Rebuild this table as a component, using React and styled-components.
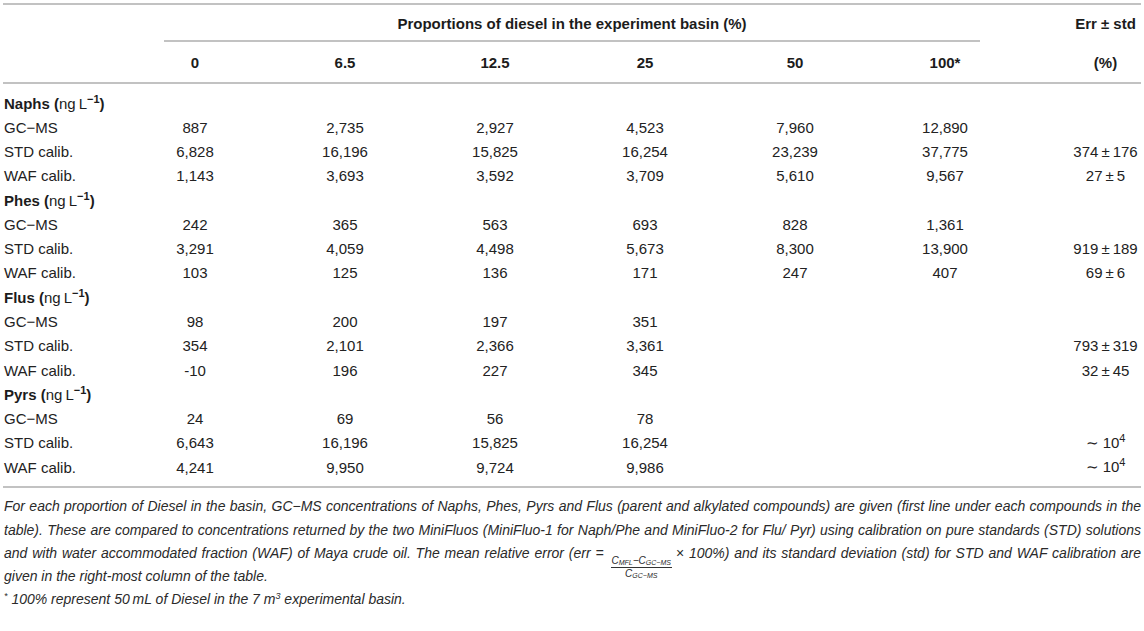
import React from 'react';
import styled, { createGlobalStyle } from 'styled-components';

const GlobalStyle = createGlobalStyle`
  html, body { margin: 0; padding: 0; background: #ffffff; }
  body { font-family: "Liberation Sans", Arial, Helvetica, sans-serif; color: #222222; }
`;

const COLS = '117px repeat(6, 150px) 1fr';
const RULE = '2px solid #c2c2c2';

const Page = styled.div`
  width: 1138px;
  padding: 3px 3px 0 3px;
`;

const Table = styled.div`
  border-top: ${RULE};
  border-bottom: ${RULE};
  font-size: 15px;
`;

const HeadRow = styled.div`
  display: grid;
  grid-template-columns: ${COLS};
  height: ${(p) => p.$h}px;
  align-items: ${(p) => (p.$stretch ? 'stretch' : 'center')};
  border-bottom: ${(p) => (p.$ruled ? RULE : 'none')};
  font-weight: bold;
  color: #1c1c1c;
`;

const SpanTitle = styled.div`
  grid-column: 2 / 8;
  margin: 0 40px 0 44px;
  border-bottom: ${RULE};
  display: flex;
  align-items: center;
  justify-content: center;
  padding-top: 2px;
`;

const HeadCell = styled.div`
  text-align: center;
  display: flex;
  align-items: center;
  justify-content: center;
`;

const ErrHead = styled(HeadCell)`
  padding-left: 50px;
  white-space: nowrap;
`;

const Body = styled.div`
  padding: 7px 0 7px 0;
`;

const Row = styled.div`
  display: grid;
  grid-template-columns: ${COLS};
  height: 24.27px;
  align-items: center;
`;

const Label = styled.div`
  padding-left: 1px;
  white-space: nowrap;
`;

const Group = styled.div`
  grid-column: 1 / -1;
  padding-left: 1px;
  font-weight: bold;
  white-space: nowrap;
  color: #1c1c1c;
`;

const Light = styled.span`
  font-weight: normal;
`;

const Sup = styled.sup`
  font-size: ${(p) => (p.$small ? '9px' : '11px')};
  font-weight: ${(p) => (p.$bold ? 'bold' : 'inherit')};
  line-height: 0;
  vertical-align: ${(p) => (p.$small ? '5px' : '6px')};
`;

const Cell = styled.div`
  text-align: center;
  white-space: nowrap;
`;

const ErrCell = styled(Cell)`
  padding-left: 50px;
`;

const Footnote = styled.div`
  font-size: 14px;
  font-style: italic;
  line-height: 23.3px;
  color: #2a2a2a;
  padding-top: 7px;
`;

const FootLine = styled.div`
  text-align: ${(p) => (p.$justify ? 'justify' : 'left')};
  text-align-last: ${(p) => (p.$justify ? 'justify' : 'left')};
  padding-left: 1px;
`;

const Frac = styled.span`
  display: inline-flex;
  flex-direction: column;
  align-items: center;
  vertical-align: -6px;
  line-height: 10px;
  font-size: 10px;
  margin: -10px 4px -18px 2px;
`;

const Num = styled.span`
  border-bottom: 1px solid #333;
  padding: 0 1px 1px 1px;
`;

const Den = styled.span`
  padding-top: 1px;
`;

const Sub = styled.sub`
  font-size: 7px;
  line-height: 0;
  vertical-align: -1px;
`;

const Upright = styled.span`
  font-style: normal;
`;

const PM = ({ a, b }) => (
  <>
    {a}
    {'\u2009±\u2009'}
    {b}
  </>
);

const Pow = () => (
  <>
    {'∼ 10'}
    <Sup>4</Sup>
  </>
);

const groups = [
  {
    name: 'Naphs',
    rows: [
      ['GC−MS', ['887', '2,735', '2,927', '4,523', '7,960', '12,890'], null],
      ['STD calib.', ['6,828', '16,196', '15,825', '16,254', '23,239', '37,775'], <PM a="374" b="176" />],
      ['WAF calib.', ['1,143', '3,693', '3,592', '3,709', '5,610', '9,567'], <PM a="27" b="5" />],
    ],
  },
  {
    name: 'Phes',
    rows: [
      ['GC−MS', ['242', '365', '563', '693', '828', '1,361'], null],
      ['STD calib.', ['3,291', '4,059', '4,498', '5,673', '8,300', '13,900'], <PM a="919" b="189" />],
      ['WAF calib.', ['103', '125', '136', '171', '247', '407'], <PM a="69" b="6" />],
    ],
  },
  {
    name: 'Flus',
    rows: [
      ['GC−MS', ['98', '200', '197', '351', '', ''], null],
      ['STD calib.', ['354', '2,101', '2,366', '3,361', '', ''], <PM a="793" b="319" />],
      ['WAF calib.', ['-10', '196', '227', '345', '', ''], <PM a="32" b="45" />],
    ],
  },
  {
    name: 'Pyrs',
    rows: [
      ['GC−MS', ['24', '69', '56', '78', '', ''], null],
      ['STD calib.', ['6,643', '16,196', '15,825', '16,254', '', ''], <Pow />],
      ['WAF calib.', ['4,241', '9,950', '9,724', '9,986', '', ''], <Pow />],
    ],
  },
];

const headers = ['0', '6.5', '12.5', '25', '50', '100*'];

export default function App() {
  return (
    <>
      <GlobalStyle />
      <Page>
        <Table>
          <HeadRow $h={37} $stretch>
            <div />
            <SpanTitle>Proportions of diesel in the experiment basin (%)</SpanTitle>
            <ErrHead>Err ± std</ErrHead>
          </HeadRow>
          <HeadRow $h={40} $ruled>
            <div />
            {headers.map((h) => (
              <HeadCell key={h}>{h}</HeadCell>
            ))}
            <ErrHead>(%)</ErrHead>
          </HeadRow>
          <Body>
            {groups.map((g) => (
              <React.Fragment key={g.name}>
                <Row>
                  <Group>
                    {g.name} (<Light>ng{'\u2009'}L</Light>
                    <Sup $bold>−1</Sup>)
                  </Group>
                </Row>
                {g.rows.map(([label, vals, err]) => (
                  <Row key={label}>
                    <Label>{label}</Label>
                    {vals.map((v, i) => (
                      <Cell key={i}>{v}</Cell>
                    ))}
                    <ErrCell>{err}</ErrCell>
                  </Row>
                ))}
              </React.Fragment>
            ))}
          </Body>
        </Table>
        <Footnote>
          <FootLine $justify>
            For each proportion of Diesel in the basin, GC−MS concentrations of Naphs, Phes, Pyrs and Flus (parent and
            alkylated compounds) are given (first line under each compounds in the
          </FootLine>
          <FootLine $justify>
            table). These are compared to concentrations returned by the two MiniFluos (MiniFluo-1 for Naph/Phe and
            MiniFluo-2 for Flu/ Pyr) using calibration on pure standards (STD) solutions
          </FootLine>
          <FootLine $justify>
            and with water accommodated fraction (WAF) of Maya crude oil. The mean relative error (err ={' '}
            <Frac>
              <Num>
                C<Sub>MFL</Sub>−C<Sub>GC−MS</Sub>
              </Num>
              <Den>
                C<Sub>GC−MS</Sub>
              </Den>
            </Frac>
            <Upright>×</Upright> 100%) and its standard deviation (std) for STD and WAF calibration are
          </FootLine>
          <FootLine>given in the right-most column of the table.</FootLine>
          <FootLine>
            <Sup $small>*</Sup> 100% represent 50{'\u2009'}mL of Diesel in the 7 m<Sup $small>3</Sup> experimental basin.
          </FootLine>
        </Footnote>
      </Page>
    </>
  );
}
